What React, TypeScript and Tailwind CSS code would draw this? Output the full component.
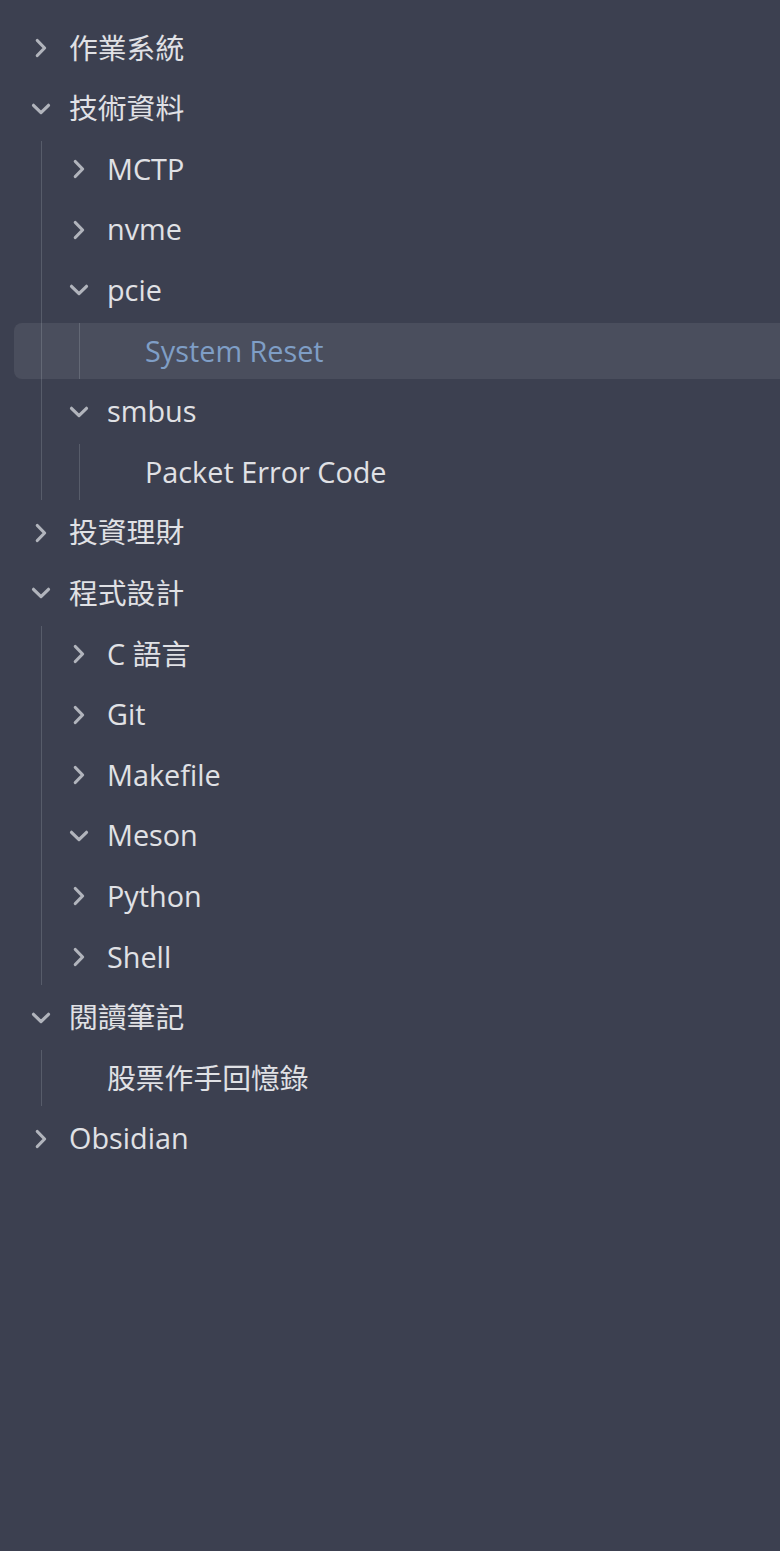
import React from "react";

type Node = {
  name: string;
  open?: boolean;
  active?: boolean;
  children?: Node[];
};

const tree: Node[] = [
  { name: "作業系統", children: [] },
  {
    name: "技術資料",
    open: true,
    children: [
      { name: "MCTP", children: [] },
      { name: "nvme", children: [] },
      {
        name: "pcie",
        open: true,
        children: [{ name: "System Reset", active: true }],
      },
      {
        name: "smbus",
        open: true,
        children: [{ name: "Packet Error Code" }],
      },
    ],
  },
  { name: "投資理財", children: [] },
  {
    name: "程式設計",
    open: true,
    children: [
      { name: "C 語言", children: [] },
      { name: "Git", children: [] },
      { name: "Makefile", children: [] },
      { name: "Meson", open: true, children: [] },
      { name: "Python", children: [] },
      { name: "Shell", children: [] },
    ],
  },
  {
    name: "閱讀筆記",
    open: true,
    children: [{ name: "股票作手回憶錄" }],
  },
  { name: "Obsidian", children: [] },
];

const Chevron = ({ open }: { open?: boolean }) => (
  <svg
    width="20"
    height="20"
    viewBox="0 0 20 20"
    fill="none"
    stroke="#b1b4bc"
    strokeWidth="3.2"
    strokeLinecap="round"
    strokeLinejoin="round"
    className="shrink-0"
  >
    {open ? <path d="M2.5 6.3 L10 13.6 L17.5 6.3" /> : <path d="M6.3 2.5 L13.6 10 L6.3 17.5" />}
  </svg>
);

const Row = ({ node, depth }: { node: Node; depth: number }) => {
  const isFolder = node.children !== undefined;
  // the highlighted row is pulled back to the left edge of the panel
  const pull = depth === 2 ? "ml-[-66px] pl-[93px]" : depth === 1 ? "ml-[-28px] pl-[55px]" : "pl-[17px]";
  const rowPad = node.active ? pull : depth === 0 ? "pl-[17px]" : "pl-[27px]";

  return (
    <div className="flex flex-col gap-[4.6px]">
      <div
        className={`flex items-center h-[56px] gap-[18px] rounded-lg mr-[-12px] ${rowPad} ${
          node.active ? "bg-white/[0.075]" : ""
        }`}
      >
        {isFolder ? <Chevron open={node.open} /> : <span className="w-5 shrink-0" />}
        <span
          className={`text-[28.8px] leading-none whitespace-nowrap ${
            node.active ? "text-[#7f9ec6]" : "text-[#e0e1e5]"
          }`}
        >
          {node.name}
        </span>
      </div>
      {node.open && node.children && node.children.length > 0 && (
        <div
          className={`flex flex-col gap-[4.6px] border-l border-[#575c6a] ${
            depth === 0 ? "ml-[27px]" : "ml-[37px]"
          }`}
        >
          {node.children.map((c) => (
            <Row key={c.name} node={c} depth={depth + 1} />
          ))}
        </div>
      )}
    </div>
  );
};

export default function App() {
  return (
    <div
      className="min-h-screen w-full overflow-hidden bg-[#3c4050] pt-[20px] pl-[14px]"
      style={{ fontFamily: '"Open Sans", "Noto Sans CJK TC", sans-serif' }}
    >
      <div className="flex flex-col gap-[4.6px]">
        {tree.map((n) => (
          <Row key={n.name} node={n} depth={0} />
        ))}
      </div>
    </div>
  );
}
